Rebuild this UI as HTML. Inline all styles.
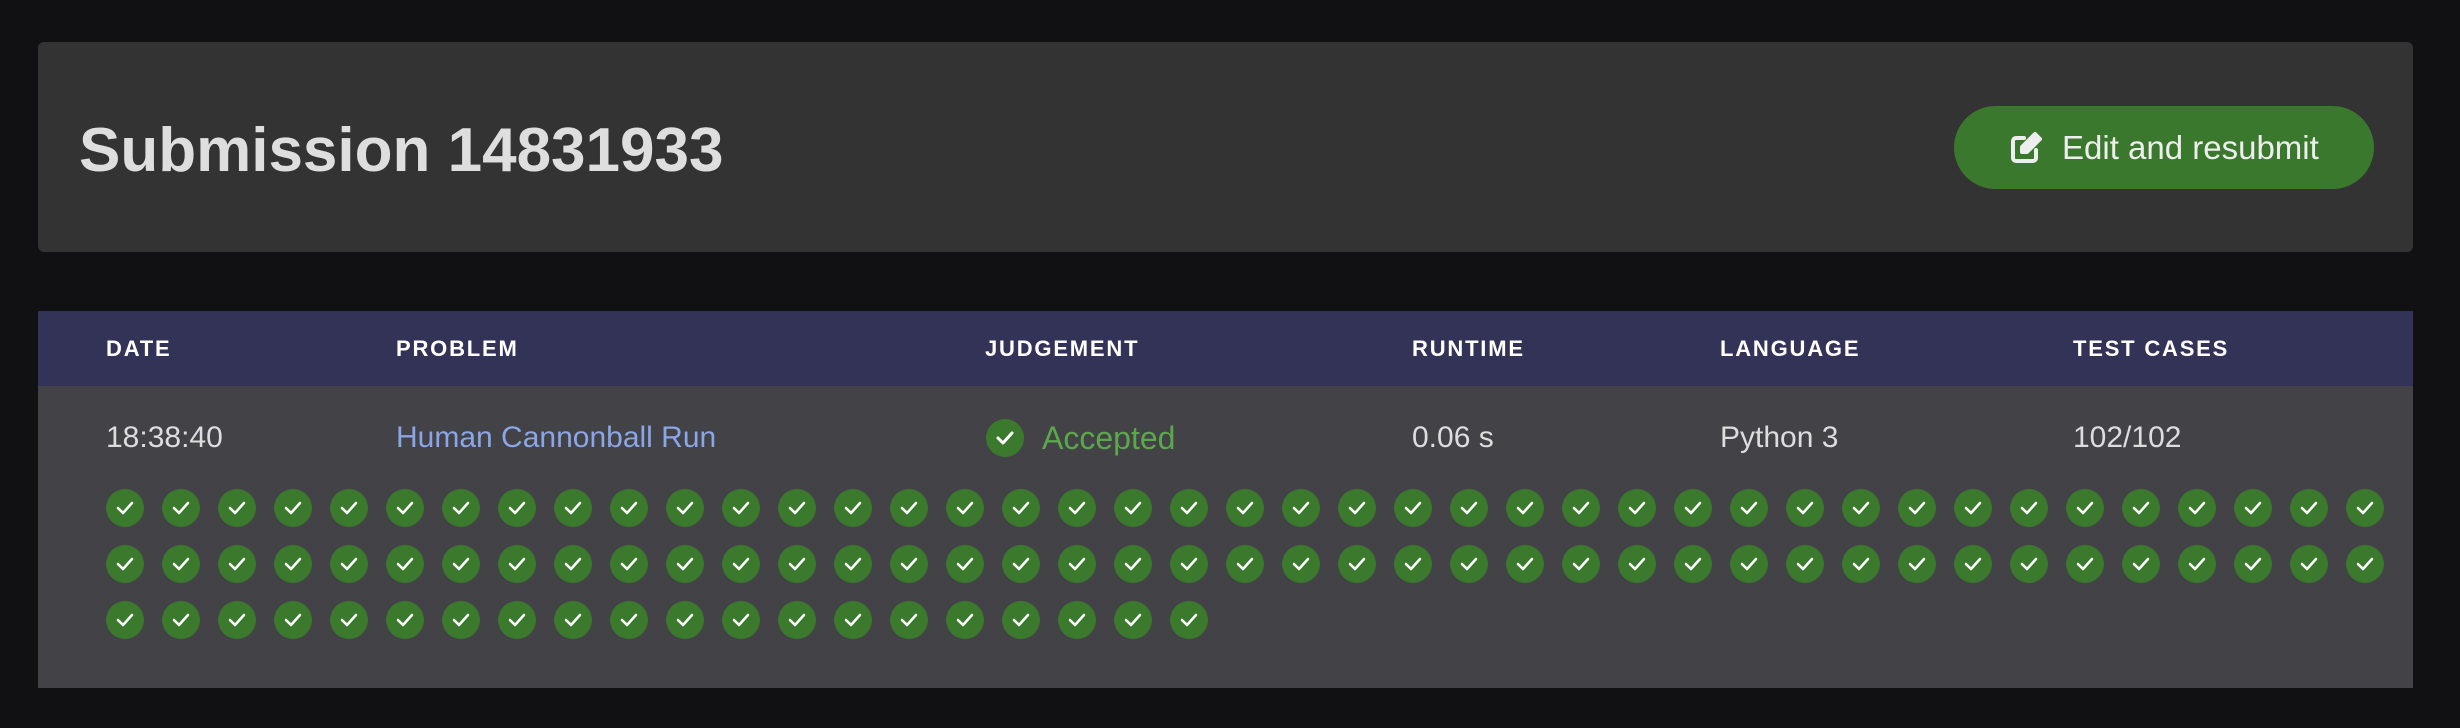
<!DOCTYPE html>
<html><head><meta charset="utf-8"><style>
body{margin:0;width:2460px;height:728px;background:#111114;font-family:"Liberation Sans",sans-serif;position:relative;overflow:hidden}
.card{position:absolute;left:38px;top:42px;width:2375px;height:210px;background:#333333;border-radius:6px}
.title{position:absolute;font-size:62px;font-weight:bold;color:#dedede;line-height:80px;margin:0}
.btn{position:absolute;left:1954px;top:106px;width:420px;height:83px;border-radius:42px;background:#3a782d;color:#eee;font-size:33px;line-height:83px}
.btn svg{position:absolute;left:55px;top:25px}
.btn span{position:absolute;left:108px;top:0}
.table{position:absolute;left:38px;top:311px;width:2375px;height:377px;background:#434247}
.head{position:absolute;left:0;top:0;width:100%;height:75px;background:#333257}
.h{position:absolute;top:0;line-height:75px;font-size:22px;font-weight:bold;letter-spacing:1.8px;color:#fff}
.c{position:absolute;top:107px;line-height:40px;font-size:30px;color:#ddd}
.dot{position:absolute;width:38px;height:38px;border-radius:50%;background:#3b7a2d}
.dot svg{position:absolute;left:9px;top:10px}
</style></head><body>
<div class="card">
<div class="title" style="left:41px;top:69px">Submission 14831933</div>
</div>
<div class="btn"><svg width="34" height="34" viewBox="0 0 34 34" fill="none" stroke="#eee" stroke-width="4" stroke-linecap="round" stroke-linejoin="round"><path d="M15 7H7a3 3 0 0 0-3 3v17a3 3 0 0 0 3 3h17a3 3 0 0 0 3-3v-8"/><path d="M26 3l5 5-13 13h-5v-5z" fill="#eee"/></svg><span>Edit and resubmit</span></div>
<div class="table">
<div class="head">
<div class="h" style="left:68px">DATE</div>
<div class="h" style="left:358px">PROBLEM</div>
<div class="h" style="left:947px">JUDGEMENT</div>
<div class="h" style="left:1374px">RUNTIME</div>
<div class="h" style="left:1682px">LANGUAGE</div>
<div class="h" style="left:2035px">TEST CASES</div>
</div>
<div class="c" style="left:68px">18:38:40</div>
<div class="c" style="left:358px;color:#8ba6e6">Human Cannonball Run</div>
<div class="dot" style="left:948px;top:108px"><svg width="20" height="18" viewBox="0 0 20 18"><path d="M3 9l5 5 9-10" fill="none" stroke="#fff" stroke-width="3" stroke-linecap="round" stroke-linejoin="round"/></svg></div>
<div class="c" style="left:1004px;color:#5aa84a;font-size:32px">Accepted</div>
<div class="c" style="left:1374px">0.06 s</div>
<div class="c" style="left:1682px">Python 3</div>
<div class="c" style="left:2035px">102/102</div>
<div id="dots"></div>
</div>
<script>
var h='',n=0;for(var r=0;r<3;r++)for(var i=0;i<41&&n<102;i++,n++){h+='<div class="dot" style="left:'+(68+i*56)+'px;top:'+(178+r*56)+'px"><svg width="20" height="18" viewBox="0 0 20 18"><path d="M3 9l5 5 9-10" fill="none" stroke="#fff" stroke-width="2.5" stroke-linecap="round" stroke-linejoin="round"/></svg></div>';}
document.getElementById('dots').innerHTML=h;
</script>
</body></html>
